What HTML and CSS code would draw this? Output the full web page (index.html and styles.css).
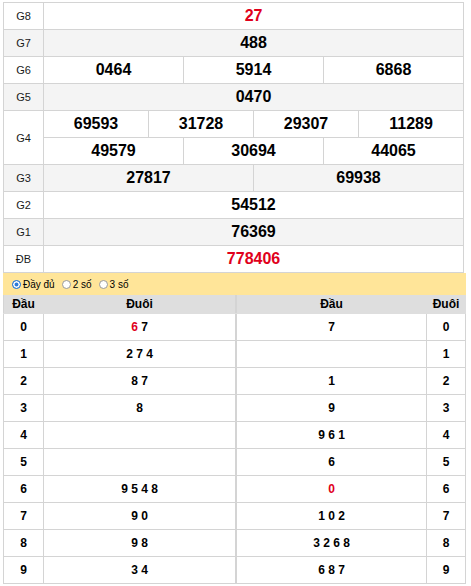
FILE: index.html
```html
<!DOCTYPE html>
<html>
<head>
<meta charset="utf-8">
<link rel="stylesheet" href="styles.css">
</head>
<body>
<div class="wrap">
  <table class="kq">
    <colgroup>
      <col class="c-lbl">
      <col class="c"><col class="c"><col class="c"><col class="c"><col class="c"><col class="c">
      <col class="c"><col class="c"><col class="c"><col class="c"><col class="c"><col class="c">
    </colgroup>
    <tr><td class="lbl">G8</td><td colspan="12" class="num red">27</td></tr>
    <tr class="alt"><td class="lbl">G7</td><td colspan="12" class="num">488</td></tr>
    <tr><td class="lbl">G6</td><td colspan="4" class="num">0464</td><td colspan="4" class="num">5914</td><td colspan="4" class="num">6868</td></tr>
    <tr class="alt"><td class="lbl">G5</td><td colspan="12" class="num">0470</td></tr>
    <tr><td class="lbl" rowspan="2">G4</td><td colspan="3" class="num">69593</td><td colspan="3" class="num">31728</td><td colspan="3" class="num">29307</td><td colspan="3" class="num">11289</td></tr>
    <tr><td colspan="4" class="num">49579</td><td colspan="4" class="num">30694</td><td colspan="4" class="num">44065</td></tr>
    <tr class="alt"><td class="lbl">G3</td><td colspan="6" class="num">27817</td><td colspan="6" class="num">69938</td></tr>
    <tr><td class="lbl">G2</td><td colspan="12" class="num">54512</td></tr>
    <tr class="alt"><td class="lbl">G1</td><td colspan="12" class="num">76369</td></tr>
    <tr><td class="lbl">ĐB</td><td colspan="12" class="num red">778406</td></tr>
  </table>

  <div class="opts">
    <label class="opt"><span class="radio on"></span>Đầy đủ</label>
    <label class="opt"><span class="radio"></span>2 số</label>
    <label class="opt"><span class="radio"></span>3 số</label>
  </div>

  <div class="loto">
    <table class="lt lt-left">
      <colgroup><col class="l1"><col class="l2"></colgroup>
      <tr class="hd"><th>Đầu</th><th>Đuôi</th></tr>
      <tr><td>0</td><td><span class="red">6</span> 7</td></tr>
      <tr><td>1</td><td>2 7 4</td></tr>
      <tr><td>2</td><td>8 7</td></tr>
      <tr><td>3</td><td>8</td></tr>
      <tr><td>4</td><td></td></tr>
      <tr><td>5</td><td></td></tr>
      <tr><td>6</td><td>9 5 4 8</td></tr>
      <tr><td>7</td><td>9 0</td></tr>
      <tr><td>8</td><td>9 8</td></tr>
      <tr><td>9</td><td>3 4</td></tr>
    </table>
    <table class="lt lt-right">
      <colgroup><col class="r1"><col class="r2"></colgroup>
      <tr class="hd"><th>Đầu</th><th>Đuôi</th></tr>
      <tr><td>7</td><td>0</td></tr>
      <tr><td></td><td>1</td></tr>
      <tr><td>1</td><td>2</td></tr>
      <tr><td>9</td><td>3</td></tr>
      <tr><td>9 6 1</td><td>4</td></tr>
      <tr><td>6</td><td>5</td></tr>
      <tr><td><span class="red">0</span></td><td>6</td></tr>
      <tr><td>1 0 2</td><td>7</td></tr>
      <tr><td>3 2 6 8</td><td>8</td></tr>
      <tr><td>6 8 7</td><td>9</td></tr>
    </table>
  </div>
</div>
</body>
</html>
```

FILE: styles.css
```css
html, body {
  margin: 0;
  padding: 0;
  background: #fff;
}
body {
  font-family: "Liberation Sans", Arial, sans-serif;
  color: #000;
}
.wrap {
  width: 461px;
  margin: 2px 0 0 3px;
}
.kq {
  width: 461px;
  border-collapse: collapse;
  table-layout: fixed;
}
.kq .c-lbl { width: 40px; }
.kq .c { width: 35px; }
.kq td {
  border: 1px solid #d4d4d4;
  height: 26px;
  padding: 0;
  text-align: center;
  vertical-align: middle;
}
.kq tr.alt td { background: #f4f4f4; }
.kq .lbl {
  font-size: 11px;
  color: #1a1a1a;
}
.kq .num {
  font-size: 16px;
  font-weight: bold;
}
.red { color: #e0001b; }

.opts {
  display: flex;
  align-items: center;
  height: 22px;
  background: #ffe599;
  padding-left: 9px;
  gap: 7px;
  width: 454px;
}
.opt {
  display: flex;
  align-items: center;
  gap: 2px;
  font-size: 10px;
  color: #000;
}
.radio {
  width: 7px;
  height: 7px;
  border-radius: 50%;
  border: 1px solid #9a9a9a;
  background: #fff;
  box-sizing: content-box;
}
.radio.on {
  border-color: #2b7bd8;
  background: #2b7bd8;
  box-shadow: inset 0 0 0 1.5px #fff;
}

.loto {
  display: flex;
}
.lt {
  border-collapse: collapse;
  table-layout: fixed;
}
.lt-left { width: 232px; }
.lt-right { width: 229px; }
.lt .l1 { width: 40px; }
.lt .l2 { width: 192px; }
.lt .r1 { width: 190px; }
.lt .r2 { width: 39px; }
.lt th {
  background: #dedede;
  height: 18px;
  padding: 0;
  font-size: 12px;
  font-weight: bold;
  border: 1px solid #dedede;
  border-top: 0;
  text-align: center;
}
.lt td {
  border: 1px solid #d4d4d4;
  height: 26px;
  padding: 0;
  font-size: 12px;
  font-weight: bold;
  text-align: center;
  vertical-align: middle;
}
.lt-left th:first-child { border-left-color: #d4d4d4; }
.lt-left th:last-child { border-right-color: #d4d4d4; }
.lt-right th:first-child { border-left-color: #d4d4d4; }
```
